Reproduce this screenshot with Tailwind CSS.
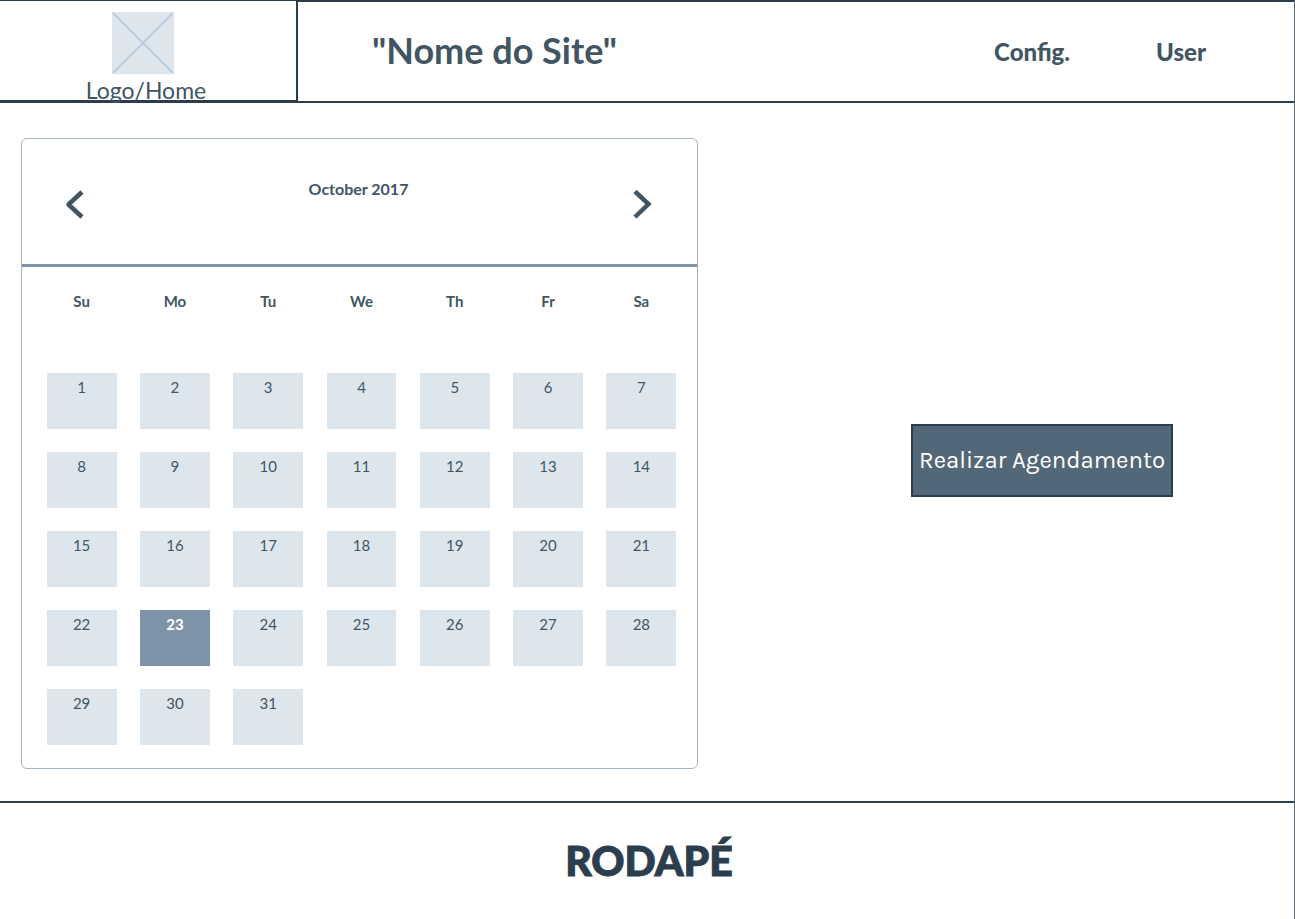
<!DOCTYPE html>
<html lang="pt-BR">
<head>
<meta charset="utf-8">
<meta name="viewport" content="width=device-width, initial-scale=1">
<title>Nome do Site</title>
<script src="https://cdn.jsdelivr.net/npm/@tailwindcss/browser@4"></script>
</head>
<body class="flex min-h-screen flex-col border-r border-[#5a6873] bg-white font-['Lato',sans-serif] text-[#425563]">
<header class="flex">
  <a href="#" class="flex h-[103px] w-[298px] shrink-0 flex-col items-center border-t border-r-2 border-b-3 border-[#2c3e4e] pt-[11px] pr-2.5">
    <svg class="size-[62px] shrink-0" viewBox="0 0 62 62" fill="none" aria-hidden="true">
      <rect width="62" height="62" fill="#dee6ed"/>
      <path d="M1 1 61 61M61 1 1 61" stroke="#bccddd" stroke-width="2"/>
    </svg>
    <span class="ml-1.5 text-[23px] leading-8">Logo/Home</span>
  </a>
  <div class="flex grow items-center justify-between border-y-2 border-[#2c3e4e] pr-[88px] pb-1 pl-[74px]">
    <h1 class="text-[36px] leading-11 font-bold">"Nome do Site"</h1>
    <nav class="flex gap-[86px] pt-1 text-[24px] leading-8 font-black">
      <a href="#">Config.</a>
      <a href="#">User</a>
    </nav>
  </div>
</header>

<main class="grid grow grid-cols-[677fr_596fr] items-start pt-[35px] pb-8 pl-[21px]">
  <section aria-label="Calendar" class="rounded-md border border-[#a3b4c5]">
    <div class="flex h-[128px] items-start justify-between border-b-3 border-[#7f93a8] pr-[45px] pl-[43px]">
      <button type="button" aria-label="Previous month" class="mt-[50px]">
        <svg class="h-8 w-5" viewBox="0 0 20 32" fill="none" stroke="#425563" stroke-width="4.500"><path d="M17 3 3.500 15.500 17 28" stroke-linejoin="round"/></svg>
      </button>
      <h2 class="pt-[38px] text-[16px] leading-6 font-bold">October 2017</h2>
      <button type="button" aria-label="Next month" class="mt-[50px]">
        <svg class="h-8 w-5" viewBox="0 0 20 32" fill="none" stroke="#425563" stroke-width="4.500"><path d="M3 2.500 16.500 15 3 28"/></svg>
      </button>
    </div>
    <div class="pr-[9px] pl-[13px]">
      <table class="w-full table-fixed border-collapse text-[15px] leading-5">
        <thead>
          <tr class="h-[106px] align-top">
            <th scope="col" class="pt-6 font-bold">Su</th><th scope="col" class="pt-6 font-bold">Mo</th><th scope="col" class="pt-6 font-bold">Tu</th><th scope="col" class="pt-6 font-bold">We</th><th scope="col" class="pt-6 font-bold">Th</th><th scope="col" class="pt-6 font-bold">Fr</th><th scope="col" class="pt-6 font-bold">Sa</th>
          </tr>
        </thead>
        <tbody id="days"></tbody>
      </table>
    </div>
  </section>
  <div class="flex justify-center pt-[286px] pl-[92px]">
    <button type="button" class="h-[73px] border-2 border-[#2c3e4e] bg-[#526878] px-[6px] pb-0.5 font-['Karla','Inter',sans-serif] text-[24px] whitespace-nowrap text-white">Realizar Agendamento</button>
  </div>
</main>

<footer class="flex h-[118px] items-center justify-center border-t-2 border-[#2c3e4e] pl-1">
  <p class="text-[41px] leading-12 font-black text-[#2c3e4e] [-webkit-text-stroke:1px_#2c3e4e]">RODAPÉ</p>
</footer>

<script>
  const body = document.getElementById('days');
  const base = 'block mx-auto h-14 w-3/4 pb-7 text-center ';
  for (let first = 1; first <= 31; first += 7) {
    const row = body.insertRow();
    for (let d = first; d < first + 7; d++) {
      const cell = row.insertCell();
      cell.className = 'h-[79px] p-0 align-top';
      if (d > 31) continue;
      const b = document.createElement('button');
      b.type = 'button';
      b.textContent = d;
      b.className = base + (d === 23 ? 'bg-[#7f93a8] font-bold text-white' : 'bg-[#dee6ed]');
      if (d === 23) b.setAttribute('aria-current', 'date');
      cell.append(b);
    }
  }
</script>
</body>
</html>
